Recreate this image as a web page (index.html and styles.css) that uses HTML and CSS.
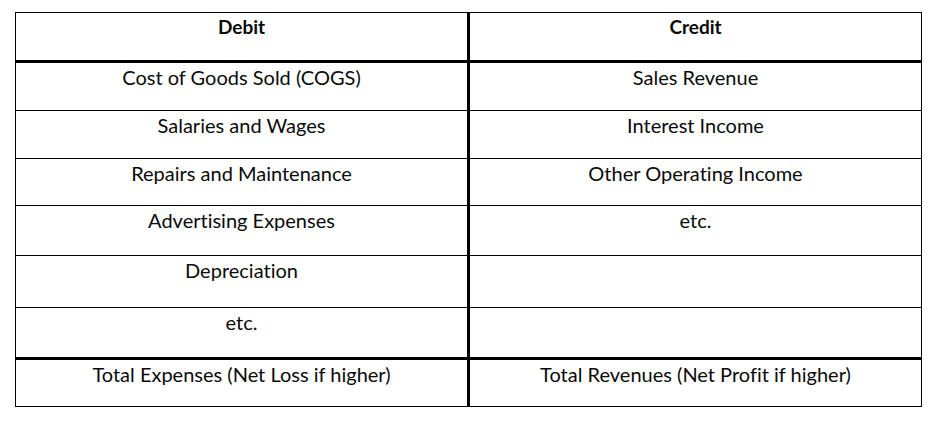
FILE: index.html
```html
<!DOCTYPE html>
<html lang="en">
<head>
<meta charset="utf-8">
<title>Debit and Credit</title>
<link rel="stylesheet" href="styles.css">
</head>
<body>
<table class="ledger">
  <thead>
    <tr class="r-head">
      <th>Debit</th>
      <th>Credit</th>
    </tr>
  </thead>
  <tbody>
    <tr class="r1"><td>Cost of Goods Sold (COGS)</td><td>Sales Revenue</td></tr>
    <tr class="r2"><td>Salaries and Wages</td><td>Interest Income</td></tr>
    <tr class="r3"><td>Repairs and Maintenance</td><td>Other Operating Income</td></tr>
    <tr class="r4"><td>Advertising Expenses</td><td>etc.</td></tr>
    <tr class="r5"><td>Depreciation</td><td></td></tr>
    <tr class="r6"><td>etc.</td><td></td></tr>
  </tbody>
  <tfoot>
    <tr class="r-total"><td>Total Expenses (Net Loss if higher)</td><td>Total Revenues (Net Profit if higher)</td></tr>
  </tfoot>
</table>
</body>
</html>
```
FILE: styles.css
```css
html, body {
  background: #ffffff;
}
body {
  margin: 12px 0 0 15px;
  font-family: Lato, "Open Sans", sans-serif;
  font-size: 20px;
  color: #0a0a0a;
  font-variant-ligatures: none;
  font-feature-settings: "liga" 0, "clig" 0;
}
.ledger {
  border-collapse: collapse;
  width: 907px;
  table-layout: fixed;
}
.ledger th,
.ledger td {
  width: 50%;
  border: 1px solid #000;
  text-align: center;
  vertical-align: top;
  padding: 2px 6px 0;
  line-height: 24px;
  box-sizing: border-box;
}
.ledger th {
  font-weight: 700;
  font-size: 19px;
  border-bottom-width: 3px;
}
.ledger th:first-child,
.ledger td:first-child {
  border-right-width: 3px;
}
.r-total td {
  border-top-width: 3px;
}
.r-head th { height: 49px; }
.r1 td { height: 49px; }
.r2 td { height: 48px; }
.r3 td { height: 47px; }
.r4 td { height: 50px; }
.r5 td { height: 52px; }
.r6 td { height: 51px; }
.r-total td { height: 48px; }
```
